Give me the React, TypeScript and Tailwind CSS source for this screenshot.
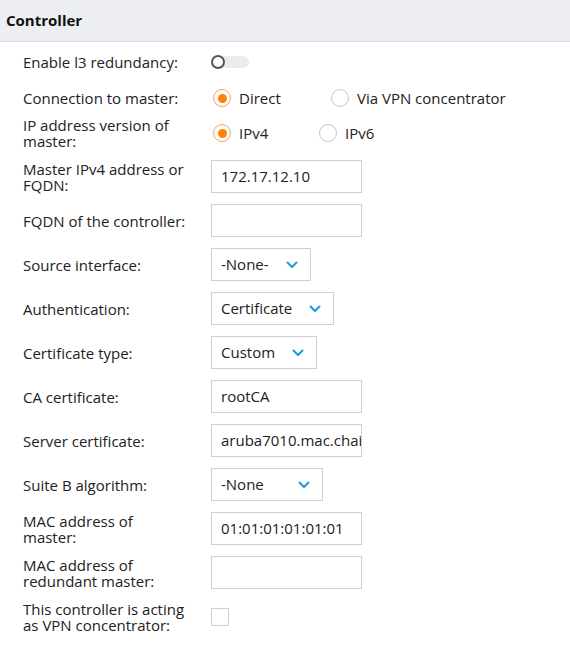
import React from "react";

const font = { fontFamily: '"Open Sans", "Noto Sans", sans-serif' };

function Label({ children }: { children: React.ReactNode }) {
  return (
    <div className="w-[211px] shrink-0 pl-[23px] text-[15px] leading-[16px] text-[#222]">
      {children}
    </div>
  );
}

function Radio({ checked, label }: { checked?: boolean; label: string }) {
  return (
    <div className="flex items-center">
      {checked ? (
        <span className="flex h-[18px] w-[18px] items-center justify-center rounded-full border border-[#f7a35c] bg-white">
          <span className="h-[9px] w-[9px] rounded-full bg-[#ff8300]" />
        </span>
      ) : (
        <span className="h-[18px] w-[18px] rounded-full border border-[#c9c9c9] bg-white" />
      )}
      <span className="ml-[8px] text-[15px] text-[#222]">{label}</span>
    </div>
  );
}

function TextInput({ value }: { value?: string }) {
  return (
    <div className="flex h-[33px] w-[151px] items-center overflow-hidden whitespace-nowrap border border-[#cfcfcf] bg-white pl-[9px] text-[15px] text-[#222]">
      {value}
    </div>
  );
}

function Select({ value, width }: { value: string; width: string }) {
  return (
    <div
      className={`flex h-[33px] items-center justify-between border border-[#cfcfcf] bg-white pl-[9px] pr-[12px] text-[15px] text-[#222] ${width}`}
    >
      <span>{value}</span>
      <svg width="12" height="8" viewBox="0 0 12 8">
        <path d="M1.5 1.5 L6 6 L10.5 1.5" fill="none" stroke="#1a9be0" strokeWidth="2" strokeLinecap="round" strokeLinejoin="round" />
      </svg>
    </div>
  );
}

function Row({ label, children, h = "h-[33px]", mt = "mt-[11px]" }: { label: React.ReactNode; children?: React.ReactNode; h?: string; mt?: string }) {
  return (
    <div className={`flex items-center ${h} ${mt}`}>
      <Label>{label}</Label>
      <div className="flex items-center">{children}</div>
    </div>
  );
}

export default function App() {
  return (
    <div className="min-h-[658px] w-[570px] bg-white" style={font}>
      <div className="flex h-[42px] items-center border-b border-[#dcdde0] bg-[#edeef1] pl-[6px] text-[15px] font-bold text-[#111]">
        Controller
      </div>
      <Row label="Enable l3 redundancy:" h="h-[24px]" mt="mt-[8px]">
        <div className="relative h-[14px] w-[38px]">
          <div className="absolute left-[3px] top-[1px] h-[12px] w-[35px] rounded-full bg-[#ebecef]" />
          <div className="absolute left-0 top-0 h-[14px] w-[14px] rounded-full border-2 border-[#555] bg-white" />
        </div>
      </Row>
      <Row label="Connection to master:" h="h-[24px]" mt="mt-[12px]">
        <div className="ml-[2px] flex items-center">
          <div className="w-[118px]">
            <Radio checked label="Direct" />
          </div>
          <Radio label="Via VPN concentrator" />
        </div>
      </Row>
      <Row label={<>IP address version of<br />master:</>} h="h-[32px]" mt="mt-[7px]">
        <div className="ml-[2px] flex items-center">
          <div className="w-[106px]">
            <Radio checked label="IPv4" />
          </div>
          <Radio label="IPv6" />
        </div>
      </Row>
      <Row label={<>Master IPv4 address or<br />FQDN:</>}>
        <TextInput value="172.17.12.10" />
      </Row>
      <Row label="FQDN of the controller:">
        <TextInput />
      </Row>
      <Row label="Source interface:">
        <Select value="-None-" width="w-[100px]" />
      </Row>
      <Row label="Authentication:">
        <Select value="Certificate" width="w-[123px]" />
      </Row>
      <Row label="Certificate type:">
        <Select value="Custom" width="w-[106px]" />
      </Row>
      <Row label="CA certificate:">
        <TextInput value="rootCA" />
      </Row>
      <Row label="Server certificate:">
        <TextInput value="aruba7010.mac.chain" />
      </Row>
      <Row label="Suite B algorithm:">
        <Select value="-None" width="w-[112px]" />
      </Row>
      <Row label={<>MAC address of<br />master:</>}>
        <TextInput value="01:01:01:01:01:01" />
      </Row>
      <Row label={<>MAC address of<br />redundant master:</>}>
        <TextInput />
      </Row>
      <Row label={<>This controller is acting<br />as VPN concentrator:</>}>
        <div className="h-[18px] w-[18px] border border-[#cfcfcf] bg-white" />
      </Row>
    </div>
  );
}
